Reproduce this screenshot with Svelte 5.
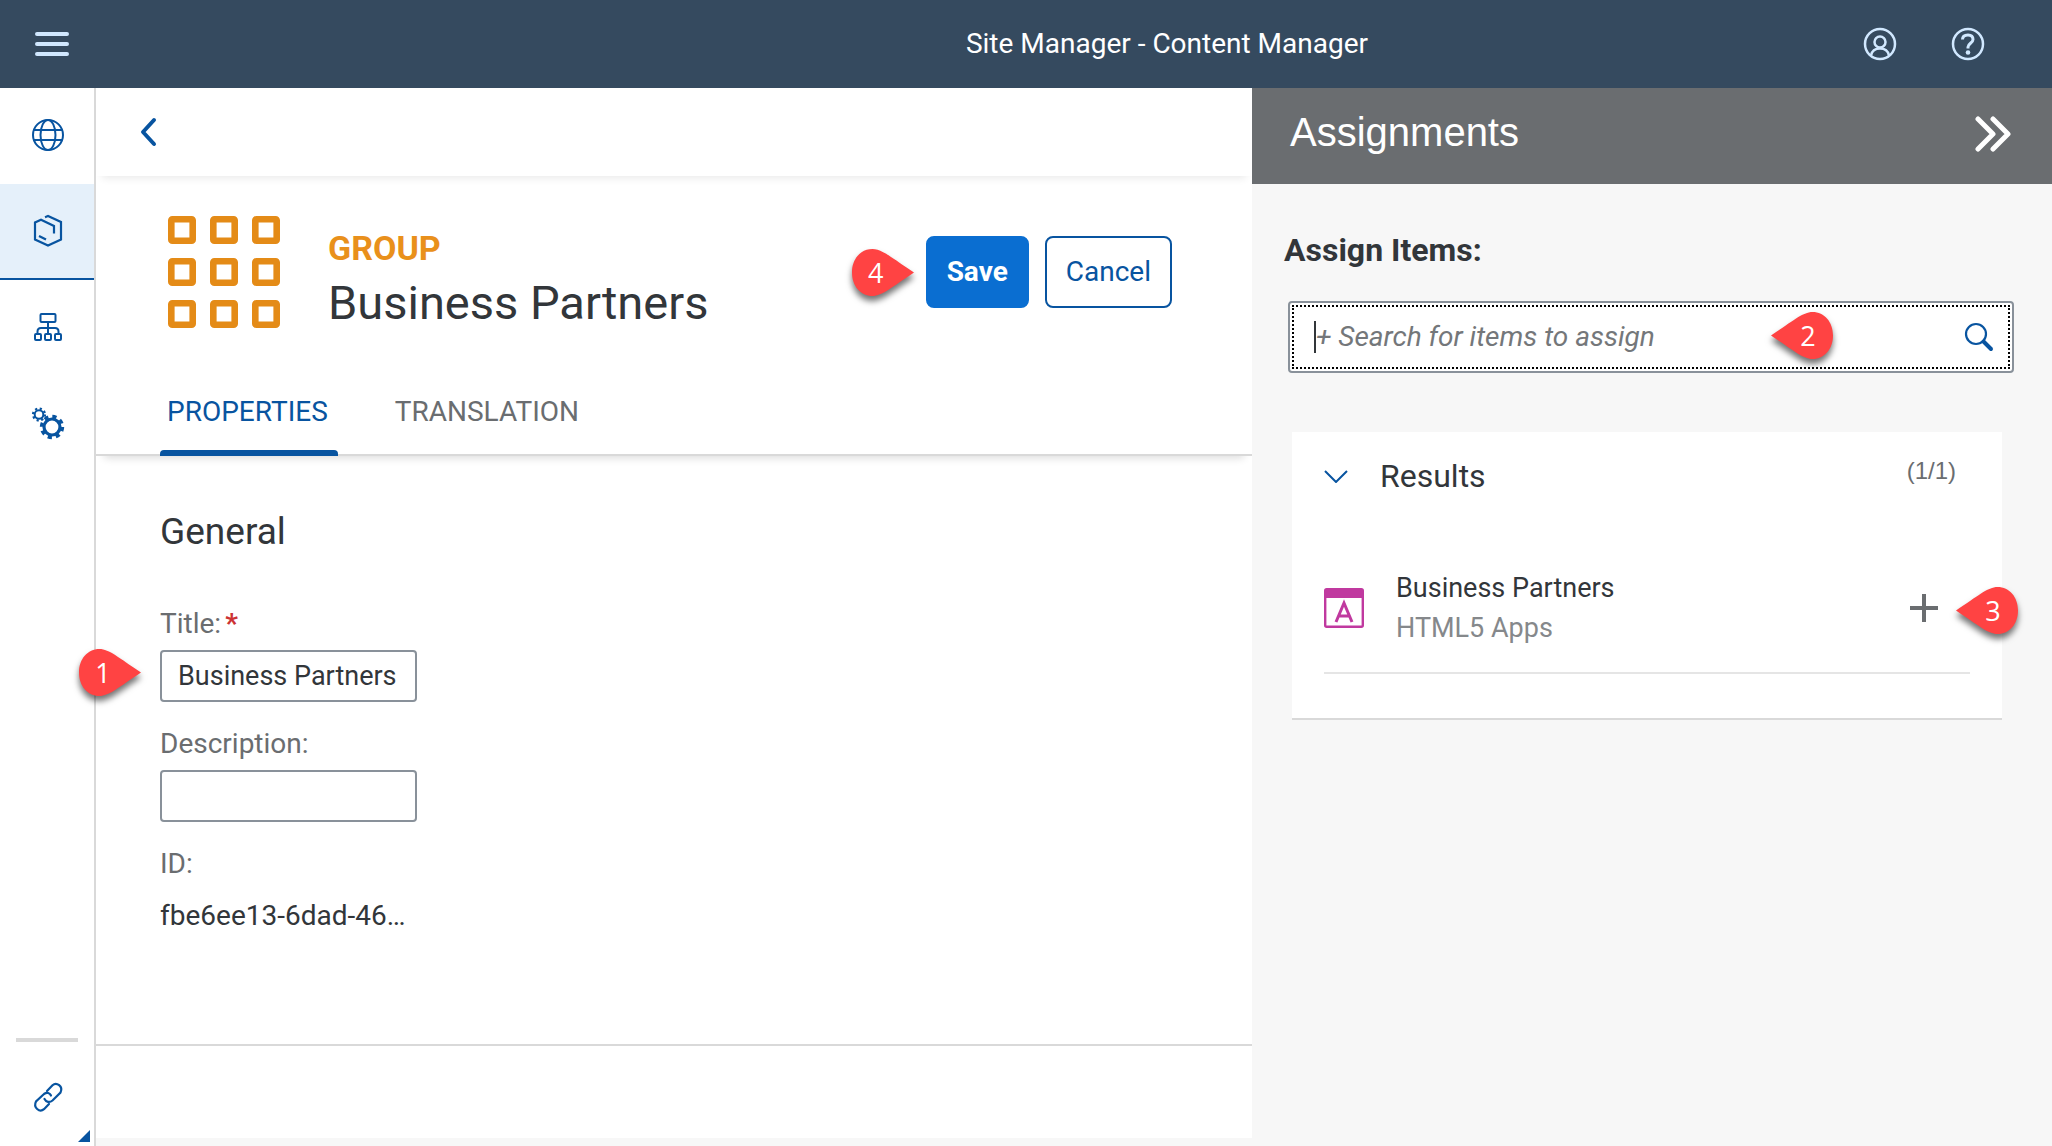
<script>
  let title = $state('Business Partners');
  let description = $state('');
  let query = $state('');

  const tiles = [0, 42, 84].flatMap((y) => [0, 42, 84].map((x) => ({ x, y })));
</script>

{#snippet pinRight(label)}
  <span class="pin east">
    <svg viewBox="0 0 62 48" width="62" height="48" aria-hidden="true">
      <path d="M20.500 0 C30 0 40 9 62 23.500 C40 38 30 47 20.500 47 C8.500 47 0 37 0 23.500 C0 10 8.500 0 20.500 0Z" />
    </svg>
    <span class="digit">{label}</span>
  </span>
{/snippet}

{#snippet pinLeft(label)}
  <span class="pin west">
    <svg viewBox="0 0 62 48" width="62" height="48" aria-hidden="true">
      <path d="M41.500 0 C32 0 22 9 0 23.500 C22 38 32 47 41.500 47 C53.500 47 62 37 62 23.500 C62 10 53.500 0 41.500 0Z" />
    </svg>
    <span class="digit">{label}</span>
  </span>
{/snippet}

<div class="app">
  <header class="shell">
    <div class="shell-start">
      <button class="plain" aria-label="Menu">
        <svg width="34" height="24" viewBox="0 0 34 24" fill="none" stroke="#d1e8ff" stroke-width="4" stroke-linecap="round"><path d="M2 2H32M2 12H32M2 22H32" /></svg>
      </button>
    </div>
    <h1>Site Manager - Content Manager</h1>
    <div class="shell-end">
      <button class="plain" aria-label="Profile">
        <svg width="34" height="34" viewBox="0 0 34 34" fill="none" stroke="#d1e8ff" stroke-width="2.500">
          <circle cx="17" cy="17" r="15" /><circle cx="17" cy="15" r="5.500" />
          <path d="M8 28.500C9 23.500 12.500 21.500 17 21.500S25 23.500 26 28.500" />
        </svg>
      </button>
      <button class="plain" aria-label="Help">
        <svg width="34" height="34" viewBox="0 0 34 34" fill="none" stroke="#d1e8ff" stroke-width="2.500">
          <circle cx="17" cy="17" r="15" />
          <path d="M11.500 12.500C11.500 9.500 13.500 8 17 8S22 10 22 12.500C22 16 17 16.500 17 20V21.500" stroke-width="3" />
          <circle cx="17" cy="25.500" r="2.300" fill="#d1e8ff" stroke="none" />
        </svg>
      </button>
    </div>
  </header>

  <div class="columns">
    <nav class="side">
      <a href="#sites" aria-label="Site Directory">
        <svg width="34" height="34" viewBox="0 0 34 34" fill="none" stroke="#0854a0" stroke-width="2">
          <circle cx="17" cy="17" r="15" /><ellipse cx="17" cy="17" rx="7.500" ry="15" /><path d="M3 12H31M3 22H31" />
        </svg>
      </a>
      <a href="#content" class="active" aria-label="Content Manager">
        <svg width="34" height="34" viewBox="0 0 34 34" fill="none" stroke="#0854a0" stroke-width="2.200">
          <path d="M14 3.200L17 2L30 8V25.500L17 31.500L4 25.500V8.500L10 5.700L23 12V19.500" /><path d="M8 22L15 25.500" />
        </svg>
      </a>
      <a href="#channels" aria-label="Channel Manager">
        <svg width="34" height="34" viewBox="0 0 34 34" fill="none" stroke="#0854a0" stroke-width="2">
          <rect x="9.500" y="4" width="15" height="8" rx="1" /><path d="M17 12V24M6.500 24V21.500Q6.500 18 10 18H24Q27.500 18 27.500 21.500V24" />
          <rect x="4" y="24" width="6" height="6" rx="1" /><rect x="14" y="24" width="6" height="6" rx="1" /><rect x="24" y="24" width="6" height="6" rx="1" />
        </svg>
      </a>
      <a href="#settings" aria-label="Settings">
        <svg width="34" height="34" viewBox="0 0 34 34" fill="none" stroke="#0854a0">
          <circle cx="8" cy="8.500" r="4.300" stroke-width="2" />
          <circle cx="8" cy="8.500" r="6" stroke-width="2.200" stroke-dasharray="2.200 2.510" />
          <circle cx="21" cy="21" r="8" stroke-width="3.200" />
          <circle cx="21" cy="21" r="10.500" stroke-width="3.400" stroke-dasharray="4.200 4.050" />
        </svg>
      </a>
      <div class="side-foot">
        <hr />
        <a href="#links" aria-label="Useful Links">
          <svg width="34" height="34" viewBox="0 0 34 34" fill="none" stroke="#0854a0" stroke-width="2.200" stroke-linecap="round">
            <path d="M16 11L21.500 5.300C25.500 1.500 32.500 6.500 29.500 12.500L21.500 20.500C18.500 23 15 22 13.500 19" />
            <path d="M18 24L13 29.200C8.500 33 2 27.500 5 21.500L13 14C16 11.800 19 13 20 15.500" />
          </svg>
        </a>
        <span class="corner"></span>
      </div>
    </nav>

    <main>
      <div class="toolbar">
        <button class="plain" aria-label="Back">
          <svg width="18" height="30" viewBox="0 0 18 30" fill="none" stroke="#0854a0" stroke-width="4" stroke-linecap="round" stroke-linejoin="round"><path d="M15 3L4 15L15 27" /></svg>
        </button>
      </div>

      <section class="object">
        <svg width="112" height="112" viewBox="0 0 112 112" aria-hidden="true">
          {#each tiles as t}
            <rect x={t.x + 3.3} y={t.y + 3.3} width="21.400" height="21.400" rx="1" fill="none" stroke="#e48b17" stroke-width="6.600" />
          {/each}
        </svg>
        <div class="names">
          <p class="kind">GROUP</p>
          <h2>Business Partners</h2>
        </div>
        <div class="actions">
          {@render pinRight('4')}
          <button class="save">Save</button>
          <button class="cancel">Cancel</button>
        </div>
      </section>

      <div class="tabs" role="tablist">
        <button role="tab" aria-selected="true" class="tab selected"><span>PROPERTIES</span></button>
        <button role="tab" aria-selected="false" class="tab"><span>TRANSLATION</span></button>
      </div>

      <form class="general">
        <h3>General</h3>
        <div class="field">
          <label for="title">Title:<span class="req">*</span></label>
          <div class="control">
            {@render pinRight('1')}
            <input id="title" type="text" size="1" bind:value={title} />
          </div>
        </div>
        <div class="field">
          <label for="description">Description:</label>
          <div class="control"><input id="description" type="text" size="1" bind:value={description} /></div>
        </div>
        <div class="field">
          <label for="ident">ID:</label>
          <output id="ident">fbe6ee13-6dad-46…</output>
        </div>
      </form>
      <footer></footer>
    </main>

    <aside>
      <div class="panel-head">
        <h2>Assignments</h2>
        <button class="plain" aria-label="Collapse panel">
          <svg width="38" height="36" viewBox="0 0 38 36" fill="none" stroke="#fff" stroke-width="5" stroke-linecap="round" stroke-linejoin="round"><path d="M4 3L19 18L4 33M19 3L34 18L19 33" /></svg>
        </button>
      </div>
      <div class="panel-body">
        <label class="assign" for="search">Assign Items:</label>
        <div class="search">
          <div class="search-inner">
            <span class="caret"></span>
            <input id="search" type="text" placeholder="+ Search for items to assign" bind:value={query} />
            <button class="plain" aria-label="Search">
              <svg width="30" height="30" viewBox="0 0 30 30" fill="none" stroke="#0854a0"><circle cx="12" cy="12" r="10" stroke-width="2.200" /><path d="M19.500 19.500L27 27" stroke-width="4" stroke-linecap="round" /></svg>
            </button>
          </div>
          {@render pinLeft('2')}
        </div>

        <section class="card">
          <div class="card-head">
            <button class="plain" aria-label="Collapse results">
              <svg width="24" height="14" viewBox="0 0 24 14" fill="none" stroke="#0854a0" stroke-width="2"><path d="M1 2L12 13L23 2" /></svg>
            </button>
            <h3>Results</h3>
            <span class="count">(1/1)</span>
          </div>
          <div class="item">
            <svg width="40" height="40" viewBox="0 0 40 40" fill="none" stroke="#c0399f" aria-hidden="true">
              <rect x="1.200" y="1.200" width="37.600" height="37.600" rx="1.500" stroke-width="2.400" />
              <path d="M1 1H39V10H1Z" fill="#c0399f" stroke="none" />
              <path d="M12 34L20 15L28 34M14.500 28H25.500" stroke-width="3" />
            </svg>
            <div class="item-text">
              <p>Business Partners</p>
              <p class="sub">HTML5 Apps</p>
            </div>
            <button class="plain" aria-label="Assign Business Partners">
              <svg width="28" height="28" viewBox="0 0 28 28" stroke="#6a6d70" stroke-width="4"><path d="M14 0V28M0 14H28" /></svg>
            </button>
            {@render pinLeft('3')}
          </div>
        </section>
      </div>
    </aside>
  </div>
</div>

<style>
  :global(body) { margin: 0; background: #f7f7f7; }
  .app {
    display: flex;
    flex-direction: column;
    min-height: 100vh;
    font-family: Roboto, "Liberation Sans", sans-serif;
    font-size: 28px;
    line-height: 40px;
    color: #32363a;
  }
  h1, h2, h3, p { margin: 0; font-weight: 400; }
  svg { display: block; flex: none; }
  button { font: inherit; cursor: pointer; }
  .plain { display: flex; padding: 0; border: 0; background: none; }
  input { font: inherit; color: inherit; box-sizing: border-box; min-width: 0; }

  .shell { display: flex; align-items: center; height: 88px; background: #354a5f; }
  .shell-start { flex: 0 1 463px; padding-left: 35px; }
  .shell h1 { flex: 1; font-size: 28px; text-align: center; color: #fff; }
  .shell-end { display: flex; gap: 54px; width: 149px; padding-right: 67px; justify-content: flex-end; }

  .columns { display: flex; flex: 1; }
  .side {
    display: flex;
    flex-direction: column;
    width: 94px;
    flex: none;
    background: #fff;
    border-right: 2px solid #d9d9d9;
  }
  .side a {
    display: flex;
    align-items: center;
    justify-content: center;
    height: 96px;
    box-sizing: border-box;
    padding: 0 0 2px 2px;
  }
  .side a.active { padding-bottom: 0; background: #e5f0fa; border-bottom: 2px solid #0854a0; }
  .side-foot { position: relative; margin-top: auto; }
  .side-foot hr { height: 4px; margin: 0 16px 8px; border: 0; background: #d9d9d9; }
  .corner {
    position: absolute;
    right: 4px;
    bottom: 4px;
    border-left: 12px solid transparent;
    border-bottom: 12px solid #0854a0;
  }

  main { display: flex; flex-direction: column; flex: 1; min-width: 0; margin-bottom: 8px; background: #fff; }
  .toolbar { display: flex; align-items: center; height: 88px; padding-left: 43px; box-shadow: 0 8px 8px -6px rgb(0 0 0 / 9%); }
  .object { display: flex; align-items: flex-start; padding: 40px 80px 30px 72px; }
  .names { flex: 1; padding: 12px 0 0 48px; }
  .kind { font-size: 34px; font-weight: 700; color: #e9901b; }
  .names h2 { font-size: 47px; line-height: 70px; }
  .actions { position: relative; display: flex; gap: 16px; margin-top: 20px; }
  .actions button { height: 72px; padding: 0 19px; border: 2px solid #0854a0; border-radius: 8px; }
  .save { background: #0a6ed1; font-weight: 700; color: #fff; }
  .actions .save { border-color: #0a6ed1; }
  .cancel { background: #fff; color: #0854a0; }

  .tabs {
    display: flex;
    gap: 50px;
    height: 88px;
    padding-left: 64px;
    box-sizing: border-box;
    border-bottom: 2px solid #d9d9d9;
    box-shadow: 0 10px 8px -8px rgb(0 0 0 / 14%);
  }
  .tab { display: flex; flex-direction: column; height: 88px; padding: 0; border: 0; background: none; color: #6a6d70; }
  .tab span { padding: 24px 10px 18px 7px; }
  .tab.selected { color: #0854a0; }
  .tab.selected::after { content: ""; width: 100%; height: 6px; border-radius: 4px 4px 0 0; background: #0854a0; }

  .general { flex: 1; padding: 52px 64px 0; }
  .general h3 { margin-bottom: 48px; font-size: 37px; line-height: 48px; }
  .field { display: flex; flex-direction: column; gap: 6px; max-width: 257px; margin-bottom: 22px; }
  .field label { color: #6a6d70; }
  .req { margin-left: 4px; font-weight: 700; color: #cc3333; }
  .control { position: relative; display: flex; }
  .control input { flex: 1; height: 52px; padding: 0 16px; border: 2px solid #89919a; border-radius: 4px; background: #fff; font-size: 27px; }
  output { line-height: 52px; white-space: nowrap; }
  footer { height: 92px; border-top: 2px solid #d9d9d9; }

  aside { width: 39%; max-width: 800px; flex: none; }
  .panel-head { display: flex; align-items: center; justify-content: space-between; height: 96px; padding: 0 40px 4px 38px; box-sizing: border-box; background: #6a6d70; }
  .panel-head h2 { padding-bottom: 4px; font: 40px/48px "Liberation Sans", Arial, sans-serif; color: #fff; }
  .panel-body { padding: 45px 38px 0 32px; }
  .assign { display: block; margin-bottom: 30px; font-size: 32px; line-height: 42px; font-weight: 700; }
  .search { position: relative; height: 72px; margin-left: 4px; padding: 2px; box-sizing: border-box; border: 2px solid #89919a; border-radius: 4px; background: #fff; }
  .search-inner { display: flex; align-items: center; height: 100%; box-sizing: border-box; padding: 0 14px 0 20px; border: 2px dotted #000; }
  .caret { width: 2px; height: 32px; background: #32363a; }
  .search input { flex: 1; padding: 0; border: 0; outline: 0; background: none; }
  .search input::placeholder { color: #74777a; font-style: italic; opacity: 1; }

  .card { margin: 59px 12px 0 8px; padding: 0 32px 44px; background: #fff; border-bottom: 2px solid #d9d9d9; }
  .card-head { display: flex; align-items: center; height: 88px; margin-bottom: 24px; padding-right: 14px; }
  .card-head h3 { flex: 1; padding-left: 32px; font-size: 32px; }
  .count { padding-bottom: 10px; font: 24px/40px "Liberation Sans", Arial, sans-serif; color: #6a6d70; }
  .item { position: relative; display: flex; align-items: center; height: 128px; padding-right: 32px; border-bottom: 2px solid #e5e5e5; font-size: 27px; }
  .item-text { flex: 1; padding-left: 32px; }
  .sub { color: #85888b; }

  .pin { position: absolute; z-index: 2; width: 62px; height: 48px; }
  .pin svg { fill: #ff4343; overflow: visible; filter: drop-shadow(0 5px 3px rgb(0 0 0 / 55%)); }
  .digit { position: absolute; inset: 0; font: 27px/48px "Open Sans", sans-serif; text-align: center; color: #fff; }
  .east .digit { right: 14px; }
  .west .digit { left: 12px; }
  .actions .pin { left: -74px; top: 13px; }
  .control .pin { left: -81px; top: -1px; }
  .search .pin { right: 179px; top: 9px; }
  .item .pin { right: -48px; top: 43px; }
</style>
